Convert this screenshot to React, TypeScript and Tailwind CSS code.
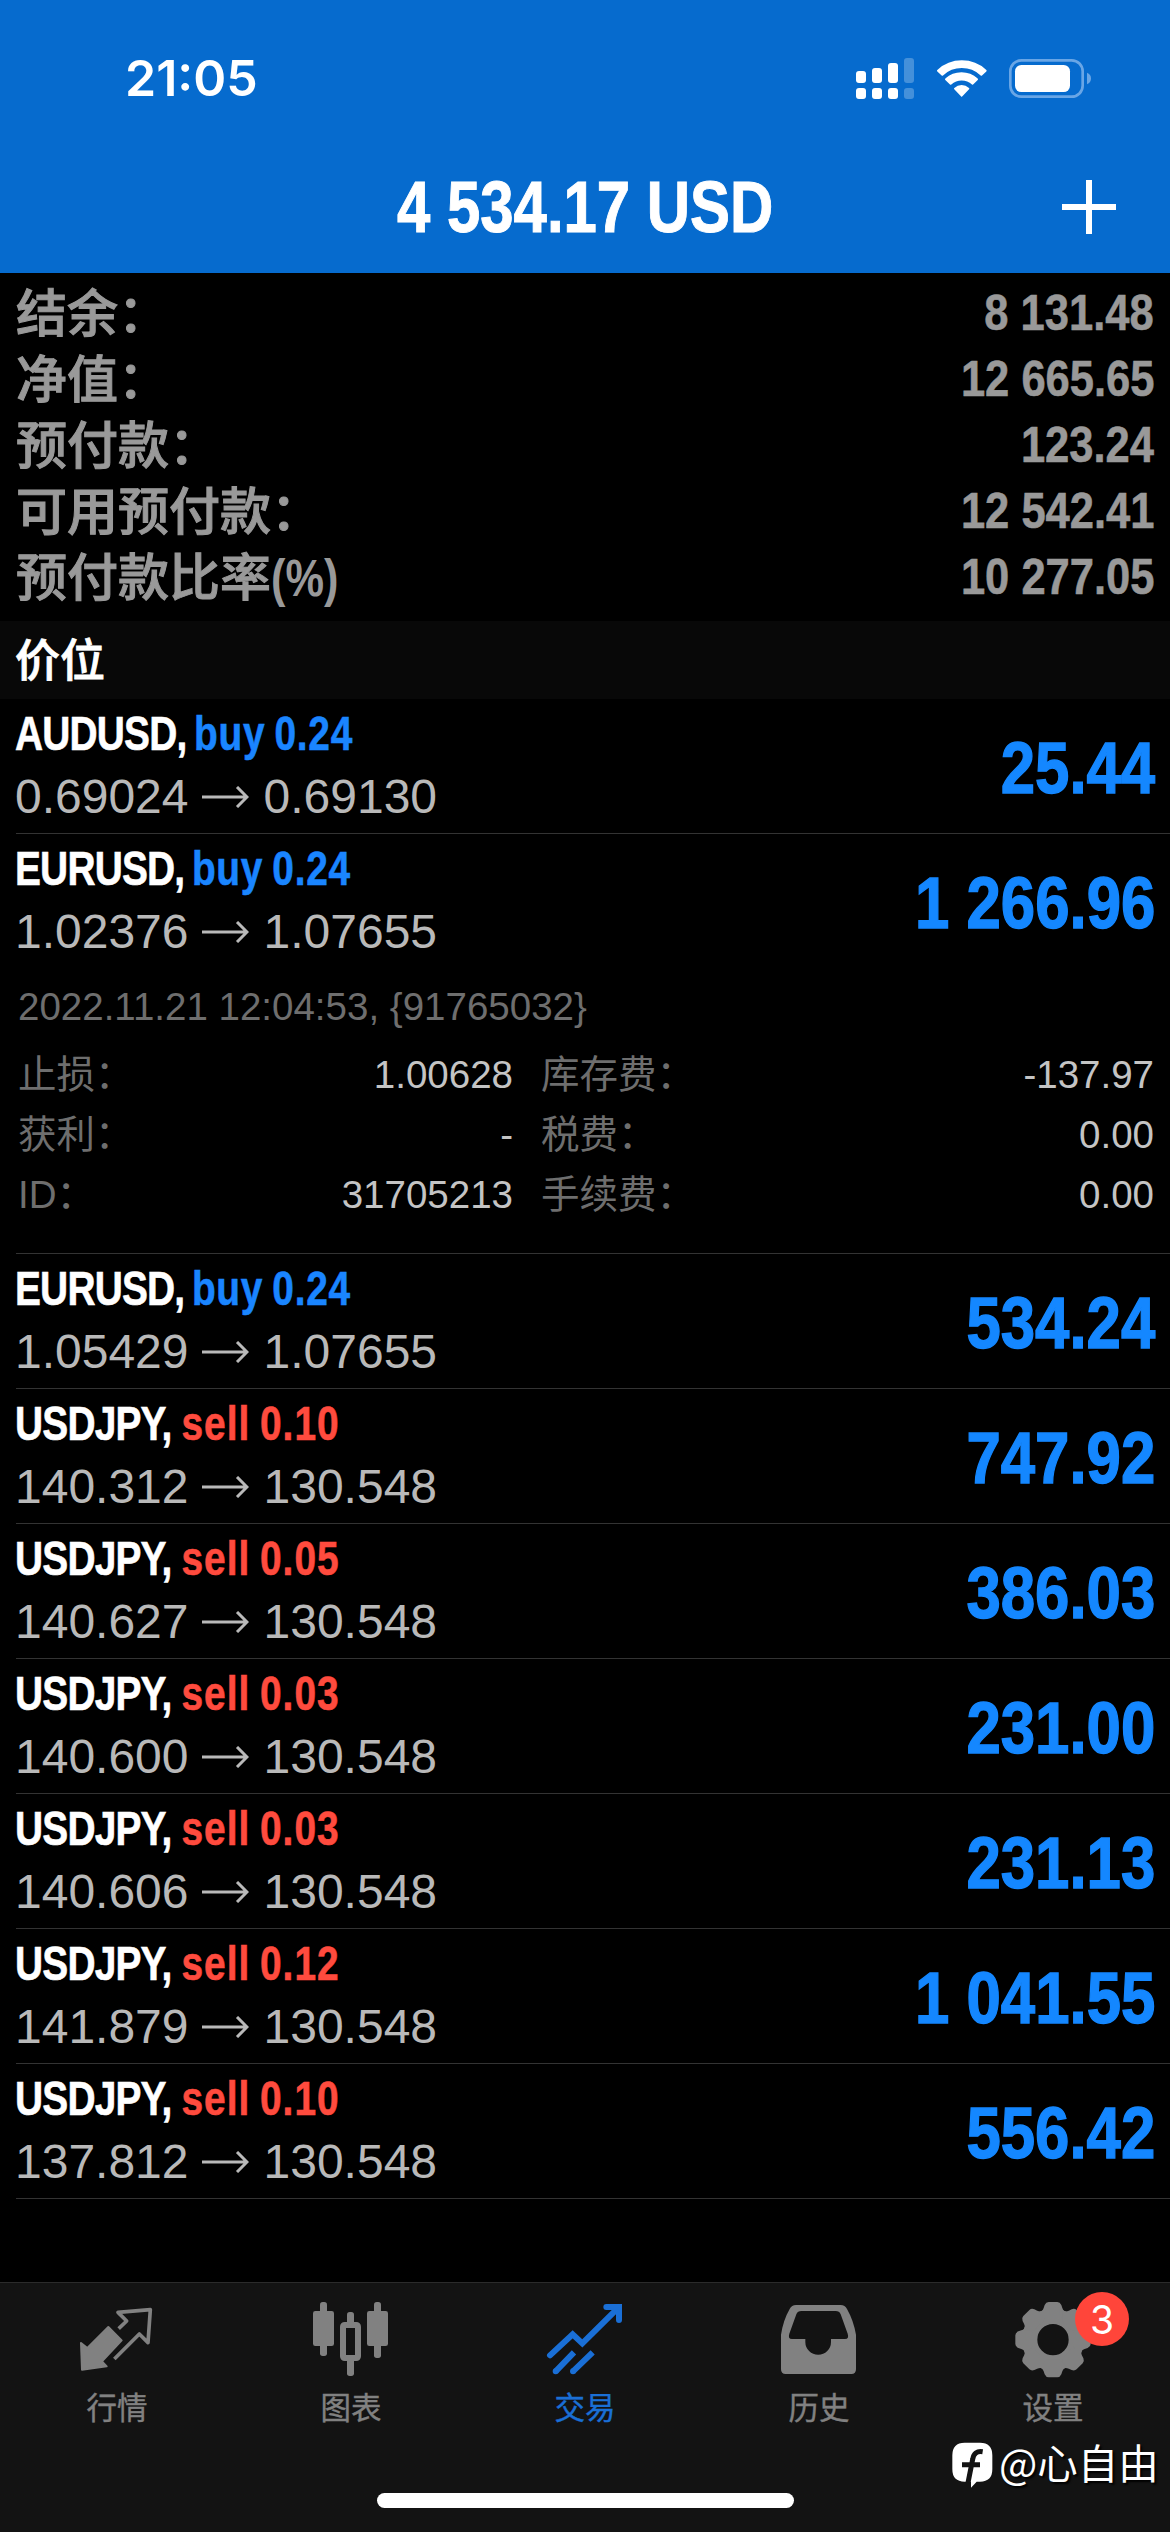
import type { ReactNode } from "react";

interface Position {
  symbol: string;
  side: "buy" | "sell";
  volume: string;
  open: string;
  current: string;
  profit: string;
  expanded?: boolean;
}

const SUMMARY = [
  { label: "结余：", value: "8 131.48" },
  { label: "净值：", value: "12 665.65" },
  { label: "预付款：", value: "123.24" },
  { label: "可用预付款：", value: "12 542.41" },
  { label: "预付款比率", unit: "(%)", value: "10 277.05" },
];

const POSITIONS: Position[] = [
  { symbol: "AUDUSD", side: "buy", volume: "0.24", open: "0.69024", current: "0.69130", profit: "25.44" },
  { symbol: "EURUSD", side: "buy", volume: "0.24", open: "1.02376", current: "1.07655", profit: "1 266.96", expanded: true },
  { symbol: "EURUSD", side: "buy", volume: "0.24", open: "1.05429", current: "1.07655", profit: "534.24" },
  { symbol: "USDJPY", side: "sell", volume: "0.10", open: "140.312", current: "130.548", profit: "747.92" },
  { symbol: "USDJPY", side: "sell", volume: "0.05", open: "140.627", current: "130.548", profit: "386.03" },
  { symbol: "USDJPY", side: "sell", volume: "0.03", open: "140.600", current: "130.548", profit: "231.00" },
  { symbol: "USDJPY", side: "sell", volume: "0.03", open: "140.606", current: "130.548", profit: "231.13" },
  { symbol: "USDJPY", side: "sell", volume: "0.12", open: "141.879", current: "130.548", profit: "1 041.55" },
  { symbol: "USDJPY", side: "sell", volume: "0.10", open: "137.812", current: "130.548", profit: "556.42" },
];

const DETAILS = [
  ["止损：", "1.00628", "库存费：", "-137.97"],
  ["获利：", "-", "税费：", "0.00"],
  ["ID：", "31705213", "手续费：", "0.00"],
];

const SIDE_CLASS = {
  buy: "-ml-[3px] tracking-[0.9px] [word-spacing:-3px] text-[#1a85ff]",
  sell: "tracking-[1.3px] [word-spacing:-3px] text-[#ff4b3e]",
};

function StatusIcons() {
  return (
    <svg width="240" height="45" viewBox="225 165 720 135" fill="#fff">
      <rect x="228" y="210" width="30" height="36" rx="9" />
      <rect x="276" y="201" width="30" height="45" rx="9" />
      <rect x="324" y="186" width="30" height="60" rx="9" />
      <rect x="372" y="171" width="30" height="75" rx="9" opacity="0.25" />
      <rect x="228" y="261" width="30" height="33" rx="9" />
      <rect x="276" y="261" width="30" height="33" rx="9" />
      <rect x="324" y="261" width="30" height="33" rx="9" />
      <rect x="372" y="261" width="30" height="33" rx="9" opacity="0.25" />
      <g stroke="#fff" strokeWidth="6" strokeLinejoin="round">
        <path d="M474 209 A105 105 0 0 1 617 209 L604 221 A86 86 0 0 0 487 221 Z" />
        <path d="M498 235 A69 69 0 0 1 591 235 L578 248 A49 49 0 0 0 512 248 Z" />
        <path d="M525 263 A30 30 0 0 1 565 263 L545 284 Z" />
      </g>
      <rect x="691" y="178" width="217" height="109" rx="33" fill="none" stroke="#69a6e6" strokeWidth="8" />
      <rect x="705" y="192" width="165" height="81" rx="19" />
      <path d="M921 215 Q933 220 933 232 Q933 245 921 250 Z" fill="#69a6e6" />
    </svg>
  );
}

function Header() {
  return (
    <header className="h-[273px] bg-[#066bce] text-white">
      <div className="flex h-[141px] items-center justify-between pt-[15px] pr-[75px] pl-[125px]">
        <span className="font-[Inter,sans-serif] text-[50px] leading-none font-semibold">21:05</span>
        <StatusIcons />
      </div>
      <div className="grid h-[132px] grid-cols-[1fr_auto_1fr] items-center px-[54px]">
        <span />
        <h1 className="origin-center scale-x-[0.832] text-[72px] leading-[84px] font-bold [-webkit-text-stroke:1px_currentColor]">
          4 534.17 USD
        </h1>
        <svg className="justify-self-end" width="54" height="54" viewBox="0 0 54 54" stroke="#fff" strokeWidth="6">
          <path d="M0 27 H54 M27 0 V54" />
        </svg>
      </div>
    </header>
  );
}

function Summary() {
  return (
    <section className="h-[348px] pt-[7px] pr-[16px] pl-4 text-[#999]">
      {SUMMARY.map((row) => (
        <div key={row.label} className="flex h-[66px] items-center justify-between leading-[66px]">
          <span className="pt-[3px] text-[51px] font-medium [-webkit-text-stroke:1px_currentColor]">
            {row.label}
            {row.unit && (
              <span className="inline-block origin-left scale-x-[0.85] font-bold [-webkit-text-stroke:0]">{row.unit}</span>
            )}
          </span>
          <span className="origin-right scale-x-[0.87] text-[50px] font-bold [-webkit-text-stroke:0.6px_currentColor]">
            {row.value}
          </span>
        </div>
      ))}
    </section>
  );
}

function PositionDetails() {
  return (
    <div className="h-[284px] pt-2 pr-[16px] pl-[2px] text-[38.5px] leading-[60px] text-[#6e6e6e]">
      <div>2022.11.21 12:04:53, {"{91765032}"}</div>
      <div className="mt-2">
        {DETAILS.map(([label, value, feeLabel, fee]) => (
          <div key={label} className="flex h-[60px]">
            <span>{label}</span>
            <span className="ml-auto text-[#c4c4c4]">{value}</span>
            <div className="ml-[28px] flex w-[613px] justify-between">
              <span>{feeLabel}</span>
              <span className="text-[#c4c4c4]">{fee}</span>
            </div>
          </div>
        ))}
      </div>
    </div>
  );
}

function PositionRow({ position }: { position: Position }) {
  return (
    <div className="ml-4 border-b border-[#333]">
      <div className={position.expanded ? "flex h-[135px] justify-between pt-[3px]" : "flex h-[134px] justify-between pt-[3px]"}>
        <div className="text-[48px] leading-[63px]">
          <div className="-ml-[1px] origin-left scale-x-[0.81] font-bold tracking-[-1px] whitespace-pre text-white [-webkit-text-stroke:0.6px_currentColor]">
            {position.symbol},{" "}
            <span className={SIDE_CLASS[position.side]}>
              {position.side} {position.volume}
            </span>
          </div>
          <div className="-ml-[1px] flex items-center text-[#b9b9b9]">
            <span>{position.open}</span>
            <svg className="mr-[15px] ml-[13px]" width="47" height="22" viewBox="0 0 47 22" fill="none" stroke="currentColor" strokeWidth="3">
              <path d="M0 11 H45 M35 1 L45 11 L35 21" />
            </svg>
            <span>{position.current}</span>
          </div>
        </div>
        <div className="mr-[15px] origin-right scale-x-[0.857] pt-[3px] text-[72px] leading-[126px] font-bold text-[#1487ff] [-webkit-text-stroke:1.4px_currentColor]">
          {position.profit}
        </div>
      </div>
      {position.expanded && <PositionDetails />}
    </div>
  );
}

function QuotesIcon() {
  return (
    <svg width="78" height="78" viewBox="234 90 234 234" fill="currentColor" strokeLinejoin="round">
      <path d="M243 219 L262 234 L325 171 L365 211 L306 274 L320 289 L246 299 Z" stroke="currentColor" strokeWidth="6" />
      <path d="M356 176 L380 153 L354 127 L451 119 L444 218 L418 192 L343 267" fill="none" stroke="currentColor" strokeWidth="11" />
    </svg>
  );
}

function ChartIcon() {
  return (
    <svg width="78" height="78" viewBox="936 90 234 234" fill="currentColor">
      <rect x="960" y="96" width="21" height="162" rx="8" />
      <rect x="939" y="123" width="63" height="105" rx="7" />
      <rect x="1122" y="96" width="21" height="168" rx="8" />
      <rect x="1101" y="123" width="63" height="105" rx="7" />
      <rect x="1041" y="126" width="21" height="40" rx="8" />
      <rect x="1041" y="262" width="21" height="56" rx="8" />
      <rect x="1029" y="165" width="45" height="99" rx="5" fill="none" stroke="currentColor" strokeWidth="18" />
    </svg>
  );
}

function TradeIcon() {
  return (
    <svg width="78" height="78" viewBox="138 90 234 234" fill="none" stroke="currentColor" strokeWidth="18">
      <path d="M150 256 L218 193 L247 220 L356 112" strokeLinecap="round" />
      <path d="M319 111 H357 V150" strokeLinecap="round" />
      <path d="M167 304 L222 247 M219 304 L278 247" />
      <path d="M167 304 h.1 M219 304 h.1" strokeLinecap="round" />
    </svg>
  );
}

function HistoryIcon() {
  return (
    <svg width="78" height="78" viewBox="840 90 234 234" fill="currentColor" fillRule="evenodd">
      <path d="M888 105 H1022 Q1035 105 1041 117 Q1060 150 1068 194 V298 Q1068 312 1054 312 H857 Q843 312 843 298 V194 Q850 150 869 117 Q875 105 888 105 Z M904 123 Q893 123 889 133 L868 191 Q863 207 876 207 H916 V216 A38 38 0 0 0 993 216 V207 H1035 Q1048 207 1043 191 L1022 133 Q1018 123 1007 123 Z" />
    </svg>
  );
}

const TOOTH_ANGLES = [0, 45, 90, 135, 180, 225, 270, 315];

function SettingsIcon() {
  return (
    <svg width="78" height="78" viewBox="-117 -119 234 234" fill="currentColor">
      <circle r="70" fill="none" stroke="currentColor" strokeWidth="46" />
      {TOOTH_ANGLES.map((angle) => (
        <path
          key={angle}
          transform={`rotate(${angle})`}
          d="M-42 -82 Q-32 -84 -28 -95 L-25 -104 Q-21 -113 -13 -113 H13 Q21 -113 25 -104 L28 -95 Q32 -84 42 -82 L20 -60 H-20 Z"
        />
      ))}
    </svg>
  );
}

interface TabProps {
  label: string;
  icon: ReactNode;
  active?: boolean;
  badge?: number;
}

function Tab({ label, icon, active, badge }: TabProps) {
  return (
    <div className={active ? "flex flex-1 flex-col items-center text-[#1a6fd6]" : "flex flex-1 flex-col items-center text-[#818181]"}>
      <div className="relative">
        {icon}
        {badge && (
          <span className="absolute -top-2 left-[61px] flex size-[54px] items-center justify-center rounded-full bg-[#ff453a] font-[Inter,sans-serif] text-[39px] leading-none text-white">
            {badge}
          </span>
        )}
      </div>
      <span className="mt-3 text-[30.5px] leading-9 [-webkit-text-stroke:0.4px_currentColor]">{label}</span>
    </div>
  );
}

function Watermark() {
  return (
    <div className="absolute top-[2434px] left-[952px] flex items-center text-white">
      <svg width="42" height="48" viewBox="0 0 126 144" className="mt-[8px]">
        <path d="M38 2 H84 Q121 2 121 40 V82 Q121 119 84 119 H74 L57 137 V119 H38 Q1 119 1 82 V40 Q1 2 38 2 Z" fill="#fff" />
        <path d="M92 29 Q66 25 62 52 L48 122 M30 68 H84" fill="none" stroke="#131313" strokeWidth="15" />
      </svg>
      <span className="ml-[5px] text-[40.5px] leading-[56px] whitespace-nowrap [font-family:'Noto_Sans_CJK_SC',sans-serif] [text-shadow:2px_2px_2px_#000]">
        @心自由
      </span>
    </div>
  );
}

export default function App() {
  return (
    <div className="relative flex h-[2532px] w-[1170px] flex-col overflow-hidden bg-black [font-family:'Liberation_Sans','Noto_Sans_CJK_SC',sans-serif]">
      <Header />
      <Summary />
      <div className="h-[78px] bg-[#080808] pl-[15px] text-[45px] leading-[82px] font-medium text-white [-webkit-text-stroke:0.8px_currentColor]">
        价位
      </div>
      <main>
        {POSITIONS.map((position, index) => (
          <PositionRow key={index} position={position} />
        ))}
      </main>
      <nav className="mt-auto flex h-[250px] flex-col items-center border-t border-[#2b2b2b] bg-[#131313] pt-[17px]">
        <div className="flex w-full">
          <Tab label="行情" icon={<QuotesIcon />} />
          <Tab label="图表" icon={<ChartIcon />} />
          <Tab label="交易" icon={<TradeIcon />} active />
          <Tab label="历史" icon={<HistoryIcon />} />
          <Tab label="设置" icon={<SettingsIcon />} badge={3} />
        </div>
        <div className="mt-auto mb-6 h-[15px] w-[417px] rounded-full bg-white" />
      </nav>
      <Watermark />
    </div>
  );
}
